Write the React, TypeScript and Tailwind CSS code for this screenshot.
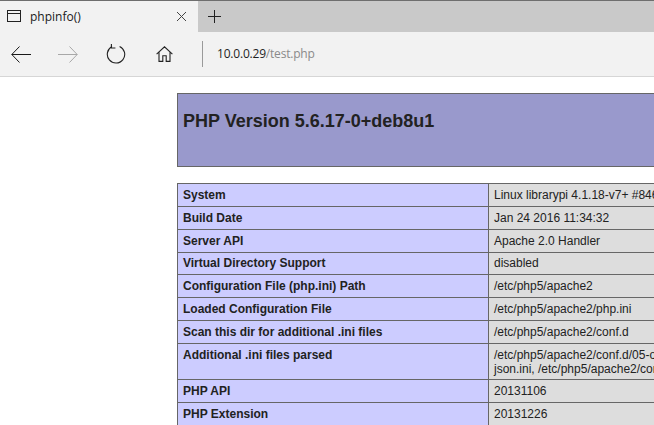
import React from 'react';

const rows = [
  ['System', 'Linux librarypi 4.1.18-v7+ #846 SMP Thu Feb 25 14:22:53 GMT 2016 armv7l'],
  ['Build Date', 'Jan 24 2016 11:34:32'],
  ['Server API', 'Apache 2.0 Handler'],
  ['Virtual Directory Support', 'disabled'],
  ['Configuration File (php.ini) Path', '/etc/php5/apache2'],
  ['Loaded Configuration File', '/etc/php5/apache2/php.ini'],
  ['Scan this dir for additional .ini files', '/etc/php5/apache2/conf.d'],
  [
    'Additional .ini files parsed',
    '/etc/php5/apache2/conf.d/05-opcache.ini, /etc/php5/apache2/conf.d/10-pdo.ini, /etc/php5/apache2/conf.d/20-json.ini, /etc/php5/apache2/conf.d/20-mysql.ini',
  ],
  ['PHP API', '20131106'],
  ['PHP Extension', '20131226'],
];

const App = () => {
  return (
    <div className="h-[425px] w-[654px] overflow-hidden bg-white font-['Liberation_Sans',sans-serif]">
      {/* Tab strip */}
      <div className="flex h-[32px] border-t border-[#6e6e6e] bg-[#c9c9c9]">
        <div className="flex w-[198px] items-center bg-[#f2f2f2] pl-[7px] pr-[11px]">
          <svg width="14" height="13" viewBox="0 0 14 13" fill="none" stroke="#222" strokeWidth="1">
            <rect x="0.5" y="0.5" width="13" height="11" />
            <path d="M0.5 3.5H13.5" />
          </svg>
          <span className="ml-[9px] flex-1 font-['Open_Sans',sans-serif] text-[12px] text-[#1a1a1a]">phpinfo()</span>
          <svg width="11" height="11" viewBox="0 0 11 11" stroke="#444" strokeWidth="1">
            <path d="M1 1L10 10M10 1L1 10" />
          </svg>
        </div>
        <div className="flex w-[33px] items-center justify-center">
          <svg width="13" height="13" viewBox="0 0 13 13" stroke="#222" strokeWidth="1">
            <path d="M6.5 0V13M0 6.5H13" />
          </svg>
        </div>
      </div>

      {/* Toolbar */}
      <div className="flex h-[45px] items-center border-b border-[#d6d6d6] bg-[#f2f2f2]">
        <svg className="ml-[11px]" width="20" height="17" viewBox="0 0 20 17" fill="none" stroke="#1a1a1a" strokeWidth="1">
          <path d="M0.8 8.5H20M8.5 0.5L0.8 8.5L8.5 16.5" />
        </svg>
        <svg className="ml-[27px]" width="20" height="17" viewBox="0 0 20 17" fill="none" stroke="#a8a8a8" strokeWidth="1">
          <path d="M0 8.5H19.2M11.5 0.5L19.2 8.5L11.5 16.5" />
        </svg>
        <svg className="ml-[28px]" width="20" height="20" viewBox="0 0 20 20" fill="none" stroke="#222" strokeWidth="1.1">
          <path d="M6 2.6A8.7 8.7 0 1 0 13.6 2.4" />
          <path d="M5.6 0.4V4.6H9.6" transform="translate(-0.2 -0.6)" />
        </svg>
        <svg className="ml-[30px]" width="17" height="16" viewBox="0 0 17 16" fill="none" stroke="#222" strokeWidth="1.1">
          <path d="M0.6 8.2L8.5 0.8L16.4 8.2M3 6.2V15.4H6.8V9.8H10.2V15.4H14V6.2" />
        </svg>
        <div className="ml-[29px] h-[26px] w-px bg-[#9a9a9a]" />
        <div className="ml-[14px] font-['Open_Sans',sans-serif] text-[12px] tracking-[-0.2px] text-[#1f1f1f]">
          10.0.0.29<span className="text-[#8a8a8a]">/test.php</span>
        </div>
      </div>

      {/* Page content */}
      <div className="ml-[177px] w-[934px] pt-[16px] text-[12px] text-[#222]">
        <div className="h-[74px] border border-[#666] bg-[#9999cc] pl-[5px] pt-[17px] text-[18px] font-bold leading-[21px]">
          PHP Version 5.6.17-0+deb8u1
        </div>
        <table className="mt-[16px] w-full table-fixed border-collapse">
          <colgroup>
            <col className="w-[311px]" />
            <col />
          </colgroup>
          <tbody>
            {rows.map(([label, value]) => {
              // the Virtual Directory row sits one pixel shorter in the picture
              const short = label === 'Virtual Directory Support';
              return (
                <tr key={label}>
                  <td className={short
                    ? 'border border-[#666] bg-[#ccccff] px-[5px] pt-[3px] pb-[3px] align-top font-bold leading-[15px]'
                    : 'border border-[#666] bg-[#ccccff] px-[5px] pt-[4px] pb-[3px] align-top font-bold leading-[15px]'}>
                    {label}
                  </td>
                  <td className={short
                    ? 'border border-[#666] bg-[#dddddd] px-[5px] pt-[3px] pb-[3px] align-top leading-[14px]'
                    : 'border border-[#666] bg-[#dddddd] px-[5px] pt-[4px] pb-[3px] align-top leading-[14px]'}>
                    {value}
                  </td>
                </tr>
              );
            })}
          </tbody>
        </table>
      </div>
    </div>
  );
};

export default App;
